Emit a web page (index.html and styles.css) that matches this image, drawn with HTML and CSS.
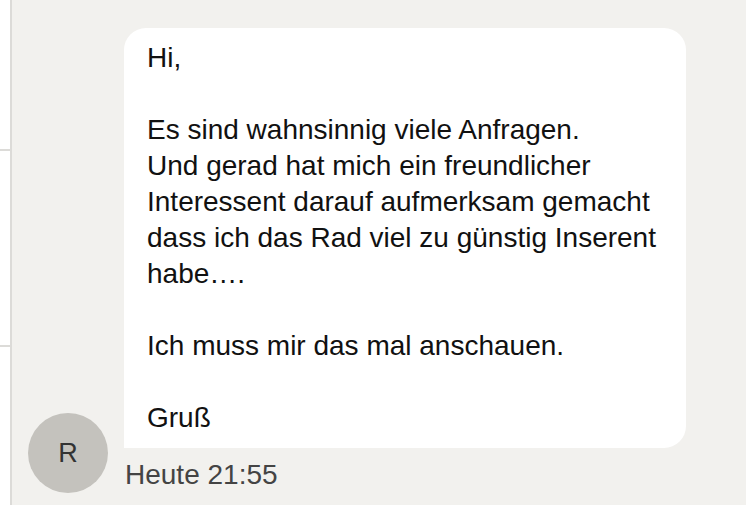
FILE: index.html
```html
<!DOCTYPE html>
<html lang="de">
<head>
   <meta charset="UTF-8">
   <meta name="viewport" content="width=device-width, initial-scale=1.0">
   <title>Nachricht</title>
   <link rel="stylesheet" href="styles.css">
</head>
<body>
   <div class="page">
       <!-- schmale Liste links -->
       <div class="sidebar">
           <div class="sidebar-item first"></div>
           <div class="sidebar-item"></div>
           <div class="sidebar-item last"></div>
       </div>

       <!-- Nachrichtenverlauf -->
       <div class="chat">
           <div class="message">
               <div class="avatar">R</div>
               <div class="message-body">
                   <div class="bubble">
                       <p>Hi,</p>
                       <p>&nbsp;</p>
                       <p>Es sind wahnsinnig viele Anfragen.</p>
                       <p>Und gerad hat mich ein freundlicher</p>
                       <p>Interessent darauf aufmerksam gemacht</p>
                       <p>dass ich das Rad viel zu günstig Inserent</p>
                       <p>habe….</p>
                       <p>&nbsp;</p>
                       <p>Ich muss mir das mal anschauen.</p>
                       <p>&nbsp;</p>
                       <p>Gruß</p>
                   </div>
                   <div class="time">Heute 21:55</div>
               </div>
           </div>
       </div>
   </div>
</body>
</html>
```
FILE: styles.css
```css
body {
    margin: 0;
    background-color: #fff;
    font-family: "Liberation Sans", Arial, sans-serif;
}
.page {
    display: flex;
    height: 505px;
}
.sidebar {
    width: 10px;
    border-right: 2px solid #dcdbd8;
    display: flex;
    flex-direction: column;
}
.sidebar-item.first {
    height: 149px;
    border-bottom: 2px solid #dcdbd8;
}
.sidebar-item {
    height: 194px;
    border-bottom: 2px solid #dcdbd8;
}
.sidebar-item.last {
    flex: 1;
    border-bottom: none;
}
.chat {
    flex: 1;
    background-color: #f2f1ee;
    padding-top: 28px;
}
.message {
    display: flex;
    align-items: flex-end;
    gap: 16px;
    padding-left: 16px;
}
.avatar {
    width: 80px;
    height: 80px;
    border-radius: 50%;
    background-color: #c4c2bd;
    color: #333;
    font-size: 27px;
    display: flex;
    align-items: center;
    justify-content: center;
    flex-shrink: 0;
}
.bubble {
    width: 562px;
    box-sizing: border-box;
    padding: 12px 23px;
    background-color: #fff;
    border-radius: 22px 22px 22px 0;
    color: #111;
    font-size: 28px;
    line-height: 36px;
}
.bubble p {
    margin: 0;
    white-space: nowrap;
}
.time {
    margin-top: 9px;
    margin-left: 1px;
    font-size: 28px;
    line-height: 36px;
    color: #444;
}
```
